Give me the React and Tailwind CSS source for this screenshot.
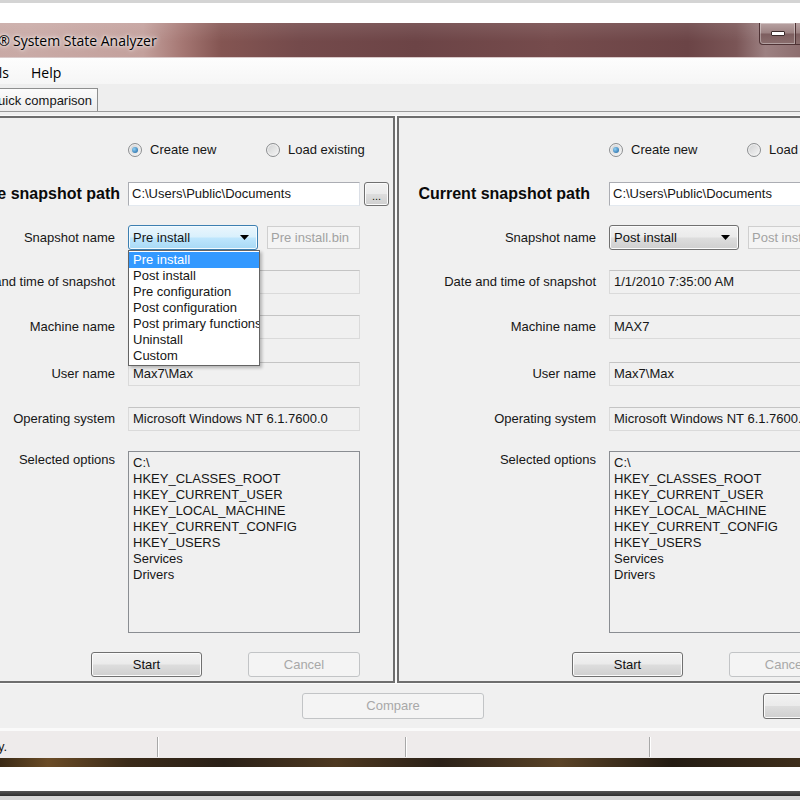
import React from "react";

const BTN =
  "rounded-[3px] border border-[#707070] bg-[linear-gradient(180deg,#f2f2f2_0%,#ebebeb_48%,#dddddd_52%,#cfcfcf_100%)] shadow-[inset_0_0_0_1px_#fbfbfb] flex items-center justify-center text-[#111]";
const BTN_DIS =
  "rounded-[3px] border border-[#c2c4c6] bg-[#f4f4f4] flex items-center justify-center text-[#a8a8a8]";
const RO =
  "h-[24px] w-[232px] flex items-center pl-[4px] whitespace-nowrap overflow-hidden border border-[#dadada] border-t-[#c4c4c4] bg-[#f0f0f0]";

function Radio({ checked, label }) {
  return (
    <div className="flex items-center whitespace-nowrap">
      <div className="w-[14px] h-[14px] rounded-full border border-[#8c8e90] bg-[linear-gradient(135deg,#cfd0d1,#f6f6f6)] flex items-center justify-center shadow-[inset_0_0_0_1px_#f2f2f2]">
        {checked && (
          <div className="w-[6px] h-[6px] rounded-full bg-[radial-gradient(circle_at_35%_35%,#8fd0f5,#1a5f9c)]" />
        )}
      </div>
      <span className="ml-[8px]">{label}</span>
    </div>
  );
}

function Arrow() {
  return (
    <svg width="9" height="5" viewBox="0 0 9 5">
      <polygon points="0,0 9,0 4.5,5" fill="#000" />
    </svg>
  );
}

const MENU_ITEMS = [
  "Pre install",
  "Post install",
  "Pre configuration",
  "Post configuration",
  "Post primary functions",
  "Uninstall",
  "Custom",
];

const OPTIONS = [
  "C:\\",
  "HKEY_CLASSES_ROOT",
  "HKEY_CURRENT_USER",
  "HKEY_LOCAL_MACHINE",
  "HKEY_CURRENT_CONFIG",
  "HKEY_USERS",
  "Services",
  "Drivers",
];

function Panel({ left }) {
  return (
    <div className="w-[479px] h-[567px] shrink-0 border-2 border-[#6e6e6e] bg-[#f0f0f0] flex flex-col shadow-[0_0_0_1px_#fafafa]">
      {/* radios */}
      <div className="mt-[22px] h-[20px] flex items-center">
        <div className="w-[210px] shrink-0" />
        <div className="w-[138px] shrink-0">
          <Radio checked label="Create new" />
        </div>
        <Radio label="Load existing" />
      </div>

      {/* path */}
      <div className="mt-[22px] h-[24px] flex items-center">
        <div
          className={
            left
              ? "w-[202px] shrink-0 text-right font-bold text-[16px] whitespace-nowrap text-[#0a0a0a]"
              : "w-[191px] shrink-0 text-right font-bold text-[16px] whitespace-nowrap text-[#0a0a0a]"
          }
        >
          {left ? "Baseline snapshot path" : "Current snapshot path"}
        </div>
        <div
          className={
            left
              ? "ml-[8px] h-[24px] w-[232px] shrink-0 flex items-center pl-[3px] whitespace-nowrap bg-white border border-[#abadb3] border-b-[#e3e9ef] border-r-[#dbdfe6]"
              : "ml-[19px] h-[24px] w-[232px] shrink-0 flex items-center pl-[3px] whitespace-nowrap bg-white border border-[#abadb3] border-b-[#e3e9ef] border-r-[#dbdfe6]"
          }
        >
          C:\Users\Public\Documents
        </div>
        <div className={"ml-[4px] w-[25px] h-[24px] shrink-0 text-[11px] leading-none " + BTN}>
          <span className="mt-[4px]">...</span>
        </div>
      </div>

      {/* snapshot name */}
      <div className="mt-[19px] h-[25px] flex items-center">
        <div className="w-[197px] shrink-0 text-right whitespace-nowrap">Snapshot name</div>
        <div className="relative ml-[13px] w-[130px] h-[25px] shrink-0">
          {left ? (
            <div className="w-full h-full rounded-[3px] border border-[#3c7fb1] bg-[linear-gradient(180deg,#eaf6fd_0%,#d9f0fc_48%,#bee6fd_52%,#a7d9f5_100%)] shadow-[inset_0_0_0_1px_#f3fbff] flex items-center pl-[4px] pr-[8px]">
              <span className="flex-1">Pre install</span>
              <Arrow />
            </div>
          ) : (
            <div className={"w-full h-full pl-[4px] pr-[8px] justify-start " + BTN}>
              <span className="flex-1">Post install</span>
              <Arrow />
            </div>
          )}
          {left && (
            <div className="absolute left-0 top-[25px] w-[132px] h-[116px] z-10 bg-white border border-[#646464] shadow-[2px_2px_3px_rgba(0,0,0,0.25)] pt-[1px] overflow-hidden">
              {MENU_ITEMS.map((m, i) => (
                <div
                  key={m}
                  className={
                    i === 0
                      ? "h-[16px] leading-[16px] pl-[4px] whitespace-nowrap bg-[#3399ff] text-white"
                      : "h-[16px] leading-[16px] pl-[4px] whitespace-nowrap"
                  }
                >
                  {m}
                </div>
              ))}
            </div>
          )}
        </div>
        <div className="ml-[9px] w-[93px] h-[23px] shrink-0 flex items-center pl-[3px] whitespace-nowrap overflow-hidden border border-[#cfcfcf] bg-[#f4f4f4] text-[#a2a2a2]">
          {left ? "Pre install.bin" : "Post install.bin"}
        </div>
      </div>

      {/* date */}
      <div className="mt-[20px] h-[24px] flex items-center">
        <div className="w-[197px] shrink-0 text-right whitespace-nowrap">Date and time of snapshot</div>
        <div className={"ml-[13px] shrink-0 " + RO}>{left ? "" : "1/1/2010 7:35:00 AM"}</div>
      </div>

      {/* machine */}
      <div className="mt-[21px] h-[24px] flex items-center">
        <div className="w-[197px] shrink-0 text-right whitespace-nowrap">Machine name</div>
        <div className={"ml-[13px] shrink-0 " + RO}>{left ? "" : "MAX7"}</div>
      </div>

      {/* user */}
      <div className="mt-[23px] h-[24px] flex items-center">
        <div className="w-[197px] shrink-0 text-right whitespace-nowrap">User name</div>
        <div className={"ml-[13px] shrink-0 " + RO}>Max7\Max</div>
      </div>

      {/* os */}
      <div className="mt-[21px] h-[24px] flex items-center">
        <div className="w-[197px] shrink-0 text-right whitespace-nowrap">Operating system</div>
        <div className={"ml-[13px] shrink-0 " + RO}>Microsoft Windows NT 6.1.7600.0</div>
      </div>

      {/* options */}
      <div className="mt-[20px] h-[182px] flex items-start">
        <div className="w-[197px] shrink-0 text-right whitespace-nowrap leading-[16px] pt-[1px]">Selected options</div>
        <div className="ml-[13px] w-[232px] h-[182px] shrink-0 border border-[#8a8d92] bg-[#f0f0f0] pt-[3px] pl-[4px] leading-[16px] overflow-hidden">
          {OPTIONS.map((o) => (
            <div key={o} className="whitespace-nowrap">
              {o}
            </div>
          ))}
        </div>
      </div>

      {/* buttons */}
      <div className="mt-[19px] h-[25px] flex items-center">
        <div className="w-[173px] shrink-0" />
        <div className={"w-[111px] h-[25px] shrink-0 " + BTN}>Start</div>
        <div className={"ml-[46px] w-[112px] h-[25px] shrink-0 " + BTN_DIS}>Cancel</div>
      </div>
    </div>
  );
}

export default function App() {
  return (
    <div className="w-[800px] h-[800px] overflow-hidden bg-[#d6d6d6] font-['Liberation_Sans',Arial,sans-serif] text-[13px] text-[#161616]">
      <div className="h-[3px] bg-[#d4d4d4]" />
      <div className="h-[20px] bg-white" />

      <div className="ml-[-90px] w-[972px] bg-[#f0f0f0]">
        {/* title bar */}
        <div className="h-[34px] flex items-center bg-[linear-gradient(180deg,rgba(255,255,255,0.10),rgba(255,255,255,0)_55%),linear-gradient(90deg,#c6a6a2_0%,#c9aaa6_12%,#c3a09c_24%,#a57773_28%,#845552_32%,#744a4b_40%,#6c4446_52%,#754b4c_66%,#6b4446_80%,#7a5556_85%,#9d8182_88%,#8b6c6d_92%)]">
          <div className="w-[100px] shrink-0 text-right whitespace-nowrap font-['Open_Sans',sans-serif] text-[14px] text-black [text-shadow:0_0_6px_#fff,0_0_3px_#fff]">
            Microsoft®
          </div>
          <div className="ml-[3px] whitespace-nowrap font-['Open_Sans',sans-serif] text-[14px] text-black [text-shadow:0_0_6px_#fff,0_0_3px_#fff]">
            System State Analyzer
          </div>
          <div className="ml-auto mr-[12px] self-start flex">
            <div className="w-[37px] h-[22px] rounded-bl-[4px] border border-t-0 border-[#4e3234] bg-[linear-gradient(180deg,#b8a2a2_0%,#9c8282_48%,#7d5e5f_52%,#8a6e6e_100%)] shadow-[inset_0_0_0_1px_rgba(255,255,255,0.35)] flex items-center justify-center">
              <div className="w-[14px] h-[5px] rounded-[1px] bg-white border border-[#3a2a2a]" />
            </div>
            <div className="w-[27px] h-[22px] border border-t-0 border-l-0 border-[#4e3234] bg-[linear-gradient(180deg,#b8a2a2_0%,#9c8282_48%,#7d5e5f_52%,#8a6e6e_100%)]" />
            <div className="w-[47px] h-[22px] rounded-br-[4px] border border-t-0 border-l-0 border-[#4e3234] bg-[linear-gradient(180deg,#e8a493_0%,#d7735e_48%,#c44f38_52%,#d6785e_100%)]" />
          </div>
        </div>
        <div className="h-px bg-[#d9c9c9]" />

        {/* menu bar */}
        <div className="h-[26px] flex items-center pt-[3px] bg-[linear-gradient(180deg,#fdfdfd,#f6f6f6)] font-['Open_Sans',sans-serif] text-[14px] text-black">
          <div className="w-[99px] shrink-0 text-right">Tools</div>
          <div className="ml-[22px]">Help</div>
        </div>

        {/* tab strip */}
        <div className="h-[27px] flex items-end bg-[#eeeeee]">
          <div className="ml-[72px] h-[23px] px-[5px] flex items-center pt-[2px] border border-b-0 border-[#8e8f8f] bg-[linear-gradient(180deg,#fbfbfb,#ededed)] whitespace-nowrap">
            Quick comparison
          </div>
        </div>

        {/* tab page */}
        <div className="border-t border-[#9a9a9a] pt-[4px] pl-[6px] flex gap-[2px] bg-[#f0f0f0]">
          <Panel left />
          <Panel />
        </div>

        {/* bottom buttons */}
        <div className="h-[45px] pt-[10px] flex items-start">
          <div className="flex-1" />
          <div className={"w-[182px] h-[26px] shrink-0 " + BTN_DIS}>Compare</div>
          <div className="flex-1 flex justify-end pr-[6px]">
            <div className={"w-[113px] h-[26px] " + BTN}>Close</div>
          </div>
        </div>

        {/* status bar */}
        <div className="h-[30px] border-t-[3px] border-[#fafafa] bg-[#eeebeb] flex">
          <div className="w-[247px] shrink-0 flex items-center pl-[57px] pt-[4px] whitespace-nowrap">Ready.</div>
          <div className="self-end mb-[1px] h-[20px] w-[2px] border-l border-[#a8a8a8] border-r border-r-white" />
          <div className="w-[246px] shrink-0" />
          <div className="self-end mb-[1px] h-[20px] w-[2px] border-l border-[#a8a8a8] border-r border-r-white" />
          <div className="w-[242px] shrink-0" />
          <div className="self-end mb-[1px] h-[20px] w-[2px] border-l border-[#a8a8a8] border-r border-r-white" />
          <div className="flex-1" />
        </div>
      </div>

      {/* window bottom frame and page edge */}
      <div className="h-[9px] bg-[linear-gradient(90deg,#3a2a16_0%,#6a4b26_6%,#3b2b19_16%,#2a2017_28%,#4d3820_42%,#2b2118_55%,#5a4327_70%,#231b12_84%,#3e2e1b_100%)]" />
      <div className="h-[24px] bg-white" />
      <div className="h-[5px] bg-[linear-gradient(180deg,#555555,#2e2e2e)]" />
    </div>
  );
}
